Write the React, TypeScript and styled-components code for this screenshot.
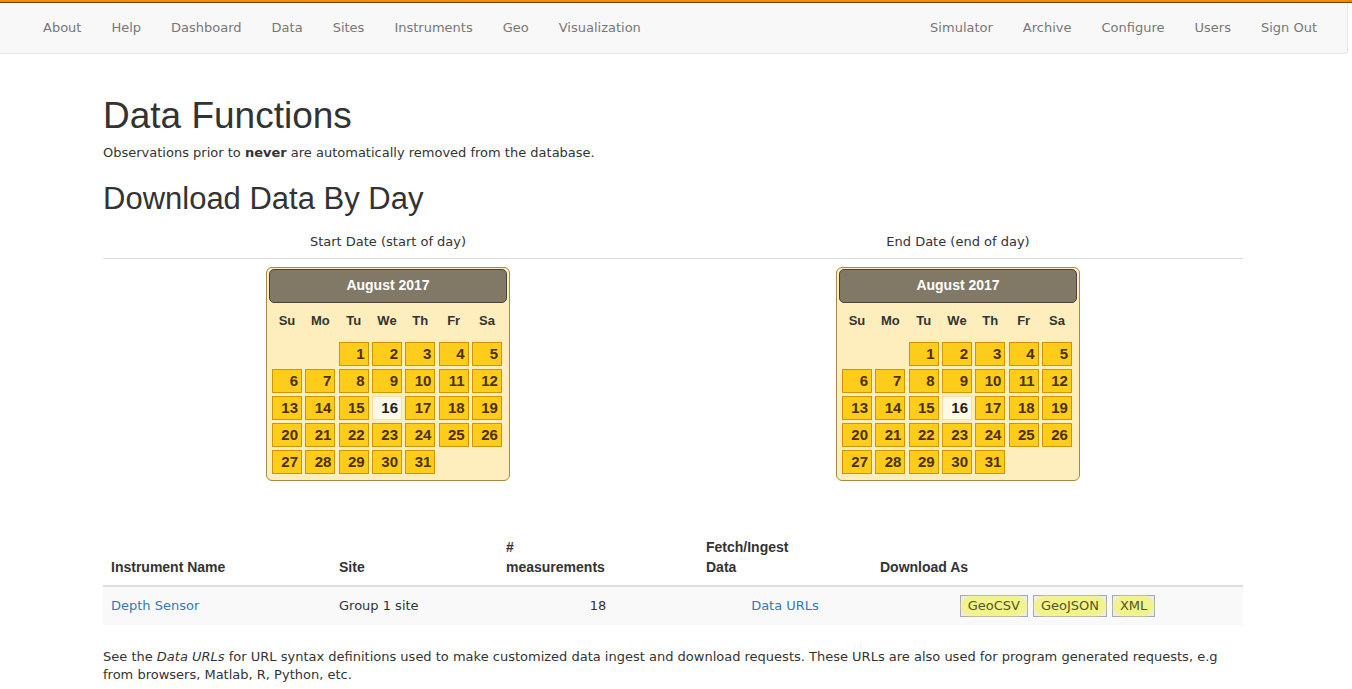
import React from "react";
import styled, { createGlobalStyle } from "styled-components";

const Global = createGlobalStyle`
  html, body { margin: 0; padding: 0; background: #fff; }
  body {
    font-family: "DejaVu Sans", Verdana, sans-serif;
    font-size: 13px;
    line-height: 1.42857;
    color: #333;
  }
  * { box-sizing: border-box; }
`;

const TopBar = styled.div`
  height: 3px;
  background: #f08a00;
  border-bottom: 1px solid #7a3c00;
`;

const NavBar = styled.nav`
  width: 1348px;
  height: 51px;
  background: #f8f8f8;
  border: 1px solid #e7e7e7;
  border-top: none;
  border-left: none;
  border-radius: 0 0 4px 0;
  display: flex;
  justify-content: space-between;
  padding: 0 15px 0 28px;
  font-family: "DejaVu Sans", Verdana, sans-serif;
  font-size: 13px;
`;

const NavGroup = styled.ul`
  display: flex;
  list-style: none;
  margin: 0;
  padding: 0;
`;

const NavItem = styled.li`
  padding: 15px 15px;
  line-height: 20px;
  color: #777;
`;

const Container = styled.main`
  width: 1140px;
  margin-left: 103px;
`;

const H1 = styled.h1`
  font-family: "Liberation Sans", Arial, sans-serif;
  font-weight: 500;
  font-size: 37px;
  line-height: 1.1;
  margin: 42px 0 7px;
  color: #333;
`;

const Para = styled.p`
  margin: 0 0 10px;
`;

const H2 = styled.h2`
  font-family: "Liberation Sans", Arial, sans-serif;
  font-weight: 500;
  font-size: 31px;
  line-height: 1.1;
  margin: 20px 0 9px;
  color: #333;
`;

const DateTable = styled.table`
  width: 100%;
  border-collapse: collapse;
  margin-bottom: 40px;
`;

const DateHead = styled.th`
  width: 50%;
  font-weight: normal;
  text-align: center;
  padding: 8px 8px 6px;
  border-bottom: 1px solid #ddd;
`;

const DateCell = styled.td`
  padding: 8px;
  text-align: center;
  vertical-align: top;
`;

const Picker = styled.div`
  display: inline-block;
  width: 244px;
  padding: 1px 2px 1px;
  background: #feeebd;
  border: 1px solid #a48a4a;
  border-radius: 6px;
  font-family: "Liberation Sans", Arial, sans-serif;
  text-align: left;
`;

const PickerHeader = styled.div`
  height: 34px;
  background: #817865;
  border: 1px solid #494437;
  border-radius: 5px;
  color: #fff;
  font-weight: bold;
  font-size: 14px;
  display: flex;
  align-items: center;
  justify-content: center;
`;

const Grid = styled.div`
  display: grid;
  grid-template-columns: repeat(7, 30px);
  column-gap: 3.33px;
  row-gap: 3px;
  padding: 0 3px 5px 3px;
`;

const WeekDay = styled.div`
  height: 36px;
  display: flex;
  align-items: center;
  justify-content: center;
  font-weight: bold;
  font-size: 13px;
  color: #333;
`;

const Day = styled.div<{ $today?: boolean; $empty?: boolean }>`
  height: 24px;
  border: 1px solid ${(p) => (p.$empty ? "transparent" : p.$today ? "#f3e2a5" : "#d19405")};
  background: ${(p) => (p.$empty ? "transparent" : p.$today ? "#fff9e5" : "#fecc1a")};
  color: ${(p) => (p.$today ? "#1f1f1f" : "#4c3000")};
  font-weight: bold;
  font-size: 15px;
  text-align: right;
  padding: 0 3px 0 0;
  line-height: 22px;
`;

const Calendar = () => {
  const days = ["Su", "Mo", "Tu", "We", "Th", "Fr", "Sa"];
  const cells: (number | null)[] = [null, null];
  for (let i = 1; i <= 31; i++) cells.push(i);
  return (
    <Picker>
      <PickerHeader>August 2017</PickerHeader>
      <Grid>
        {days.map((d) => (
          <WeekDay key={d}>{d}</WeekDay>
        ))}
        {cells.map((c, i) =>
          c === null ? (
            <Day key={"e" + i} $empty />
          ) : (
            <Day key={i} $today={c === 16}>
              {c}
            </Day>
          )
        )}
      </Grid>
    </Picker>
  );
};

const DataTable = styled.table`
  width: 100%;
  border-collapse: collapse;
  margin-bottom: 23px;
`;

const Th = styled.th<{ $w: number }>`
  width: ${(p) => p.$w}px;
  text-align: left;
  vertical-align: bottom;
  padding: 8px;
  font-family: "Liberation Sans", Arial, sans-serif;
  font-size: 14px;
  font-weight: bold;
  line-height: 20px;
  border-bottom: 2px solid #ddd;
`;

const Row = styled.tr`
  background: #f9f9f9;
`;

const Td = styled.td<{ $center?: boolean }>`
  padding: 8px;
  line-height: 20px;
  text-align: ${(p) => (p.$center ? "center" : "left")};
  vertical-align: middle;
`;

const Link = styled.a`
  color: #337ab7;
  text-decoration: none;
`;

const Buttons = styled.div`
  display: flex;
  justify-content: center;
  gap: 5px;
`;

const DlButton = styled.span`
  display: inline-flex;
  align-items: center;
  height: 22px;
  padding: 0 1px;
  border: 1px solid #a9a9a9;
  background: #ececec;
`;

const Glow = styled.span`
  background: #f3f38c;
  box-shadow: 0 0 2px 1px #f3f38c;
  border-radius: 9px;
  padding: 0 6px;
  line-height: 18px;
  color: #555522;
`;

export default function App() {
  return (
    <>
      <Global />
      <TopBar />
      <NavBar>
        <NavGroup>
          {["About", "Help", "Dashboard", "Data", "Sites", "Instruments", "Geo", "Visualization"].map((t) => (
            <NavItem key={t}>{t}</NavItem>
          ))}
        </NavGroup>
        <NavGroup>
          {["Simulator", "Archive", "Configure", "Users", "Sign Out"].map((t) => (
            <NavItem key={t}>{t}</NavItem>
          ))}
        </NavGroup>
      </NavBar>
      <Container>
        <H1>Data Functions</H1>
        <Para>
          Observations prior to <b>never</b> are automatically removed from the database.
        </Para>
        <H2>Download Data By Day</H2>
        <DateTable>
          <thead>
            <tr>
              <DateHead>Start Date (start of day)</DateHead>
              <DateHead>End Date (end of day)</DateHead>
            </tr>
          </thead>
          <tbody>
            <tr>
              <DateCell>
                <Calendar />
              </DateCell>
              <DateCell>
                <Calendar />
              </DateCell>
            </tr>
          </tbody>
        </DateTable>
        <DataTable>
          <thead>
            <tr>
              <Th $w={228}>Instrument Name</Th>
              <Th $w={167}>Site</Th>
              <Th $w={200}>
                #<br />
                measurements
              </Th>
              <Th $w={174}>
                Fetch/Ingest
                <br />
                Data
              </Th>
              <Th $w={371}>Download As</Th>
            </tr>
          </thead>
          <tbody>
            <Row>
              <Td>
                <Link href="#">Depth Sensor</Link>
              </Td>
              <Td>Group 1 site</Td>
              <Td $center>18</Td>
              <Td $center>
                <Link href="#">Data URLs</Link>
              </Td>
              <Td $center>
                <Buttons>
                  <DlButton>
                    <Glow>GeoCSV</Glow>
                  </DlButton>
                  <DlButton>
                    <Glow>GeoJSON</Glow>
                  </DlButton>
                  <DlButton>
                    <Glow>XML</Glow>
                  </DlButton>
                </Buttons>
              </Td>
            </Row>
          </tbody>
        </DataTable>
        <Para>
          See the <i>Data URLs</i> for URL syntax definitions used to make customized data ingest and download requests. These URLs are also used for program generated requests, e.g
          from browsers, Matlab, R, Python, etc.
        </Para>
      </Container>
    </>
  );
}
